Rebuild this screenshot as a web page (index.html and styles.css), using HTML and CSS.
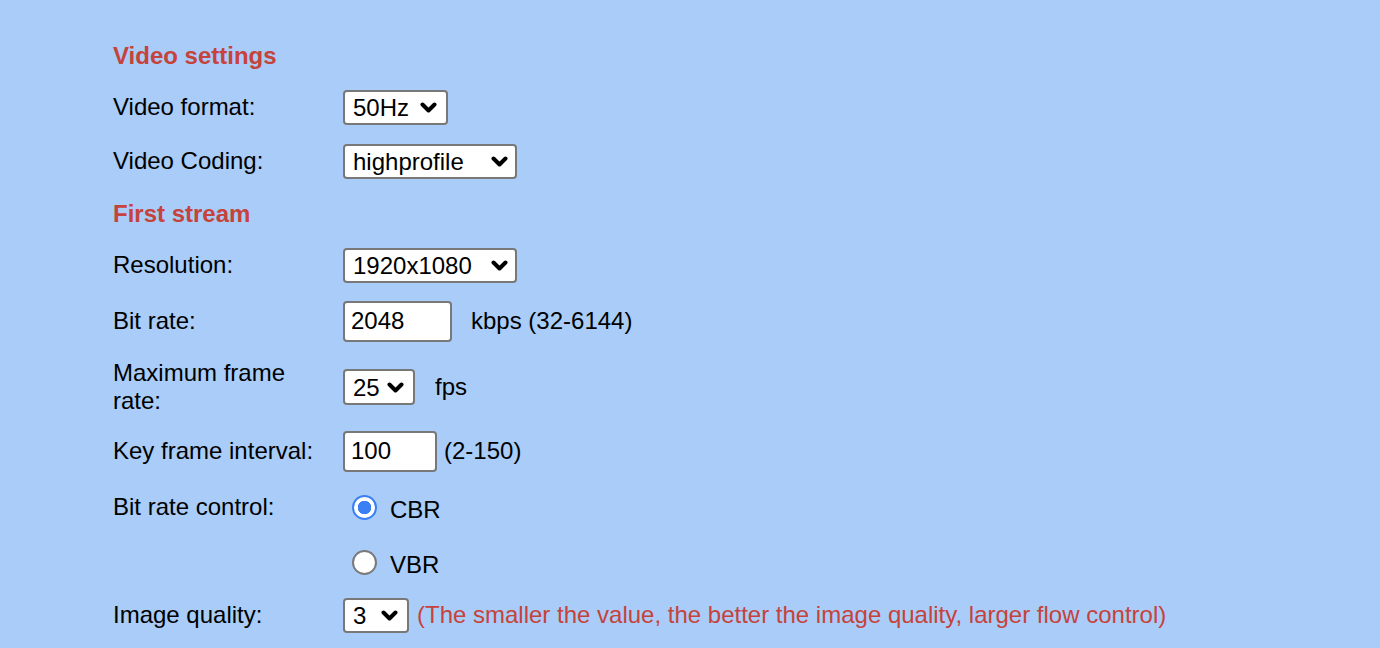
FILE: index.html
```html
<!DOCTYPE html>
<html lang="en">
<head>
<meta charset="utf-8">
<title>Video settings</title>
<link rel="stylesheet" href="styles.css">
</head>
<body>
<div class="form">
  <div class="row h50"><div class="heading">Video settings</div></div>

  <div class="row h52">
    <div class="label">Video format:</div>
    <div class="ctrl">
      <span class="sel w105"><select><option>50Hz</option><option>60Hz</option></select><svg class="chev" viewBox="0 0 17 11"><path d="M2.5 2.5 L8.5 8.5 L14.5 2.5"/></svg></span>
    </div>
  </div>

  <div class="row h56">
    <div class="label">Video Coding:</div>
    <div class="ctrl">
      <span class="sel w174 r9"><select><option>highprofile</option></select><svg class="chev" viewBox="0 0 17 11"><path d="M2.5 2.5 L8.5 8.5 L14.5 2.5"/></svg></span>
    </div>
  </div>

  <div class="row h50"><div class="heading">First stream</div></div>

  <div class="row h52">
    <div class="label">Resolution:</div>
    <div class="ctrl">
      <span class="sel w174 r9"><select><option>1920x1080</option></select><svg class="chev" viewBox="0 0 17 11"><path d="M2.5 2.5 L8.5 8.5 L14.5 2.5"/></svg></span>
    </div>
  </div>

  <div class="row h60">
    <div class="label">Bit rate:</div>
    <div class="ctrl">
      <input class="txt w109" type="text" value="2048">
      <span class="unit gap19">kbps (32-6144)</span>
    </div>
  </div>

  <div class="row h72">
    <div class="label wrap">Maximum frame rate:</div>
    <div class="ctrl">
      <span class="sel w72 tall"><select><option>25</option></select><svg class="chev" viewBox="0 0 17 11"><path d="M2.5 2.5 L8.5 8.5 L14.5 2.5"/></svg></span>
      <span class="unit gap20">fps</span>
    </div>
  </div>

  <div class="row h56">
    <div class="label">Key frame interval:</div>
    <div class="ctrl">
      <input class="txt w94" type="text" value="100">
      <span class="unit gap7">(2-150)</span>
    </div>
  </div>

  <div class="row h56">
    <div class="label">Bit rate control:</div>
    <div class="ctrl">
      <label class="radio"><input type="radio" name="brc" checked><span>CBR</span></label>
    </div>
  </div>

  <div class="row h54">
    <div class="label"></div>
    <div class="ctrl">
      <label class="radio"><input type="radio" name="brc"><span>VBR</span></label>
    </div>
  </div>

  <div class="row h52">
    <div class="label">Image quality:</div>
    <div class="ctrl">
      <span class="sel w66"><select><option>3</option></select><svg class="chev" viewBox="0 0 17 11"><path d="M2.5 2.5 L8.5 8.5 L14.5 2.5"/></svg></span>
      <span class="hint">(The smaller the value, the better the image quality, larger flow control)</span>
    </div>
  </div>
</div>
</body>
</html>
```

FILE: styles.css
```css
html, body {
  margin: 0;
  padding: 0;
  background: #a9ccf9;
}

body {
  font-family: "Liberation Sans", Arial, Helvetica, sans-serif;
  font-size: 24px;
  color: #000;
}

.form {
  padding: 31px 0 0 113px;
  display: flex;
  flex-direction: column;
}

.row {
  display: grid;
  grid-template-columns: 230px auto;
  align-items: center;
}

.h50 { height: 50px; }
.h52 { height: 52px; }
.h54 { height: 54px; }
.h56 { height: 56px; }
.h60 { height: 60px; }
.h72 { height: 72px; }

.heading {
  grid-column: 1 / span 2;
  font-weight: bold;
  color: #c5433a;
}

.label {
  line-height: 28px;
}

.label.wrap {
  width: 225px;
}

.ctrl {
  display: flex;
  align-items: center;
}

.sel {
  position: relative;
  display: inline-block;
  height: 35px;
}

.sel.tall { height: 36px; }

.sel select {
  appearance: none;
  -webkit-appearance: none;
  width: 100%;
  height: 100%;
  box-sizing: border-box;
  margin: 0;
  padding: 0 0 0 8px;
  border: 2px solid #787878;
  border-radius: 4px;
  background: #fff;
  font-family: inherit;
  font-size: 24px;
  color: #000;
  outline: none;
}

.sel .chev {
  position: absolute;
  right: 11px;
  top: 50%;
  width: 17px;
  height: 11px;
  margin-top: -5px;
  pointer-events: none;
}

.sel.r9 .chev { right: 9px; }

.chev path {
  fill: none;
  stroke: #000;
  stroke-width: 4;
  stroke-linecap: round;
  stroke-linejoin: round;
}

.w66 { width: 66px; }
.w72 { width: 72px; }
.w105 { width: 105px; }
.w174 { width: 174px; }

.txt {
  box-sizing: border-box;
  height: 41px;
  margin: 0;
  padding: 0 0 0 6px;
  border: 2px solid #787878;
  border-radius: 4px;
  background: #fff;
  font-family: inherit;
  font-size: 24px;
  color: #000;
  outline: none;
}

.w94 { width: 94px; }
.w109 { width: 109px; }

.unit { white-space: nowrap; }
.gap7 { margin-left: 7px; }
.gap19 { margin-left: 19px; }
.gap20 { margin-left: 20px; }

.hint {
  margin-left: 8px;
  color: #c5433a;
  white-space: nowrap;
}

.radio {
  display: flex;
  align-items: center;
  margin-left: 9px;
}

.radio input {
  appearance: none;
  -webkit-appearance: none;
  width: 25px;
  height: 25px;
  margin: 0 13px 0 0;
  box-sizing: border-box;
  border-radius: 50%;
  border: 2px solid #7a7a7a;
  background: #fff;
}

.radio input:checked {
  border: 2.5px solid #3b7ff5;
  background: radial-gradient(circle, #3b7ff5 0 6.5px, #fff 7px);
}

.radio span {
  position: relative;
  top: 3px;
}
```
